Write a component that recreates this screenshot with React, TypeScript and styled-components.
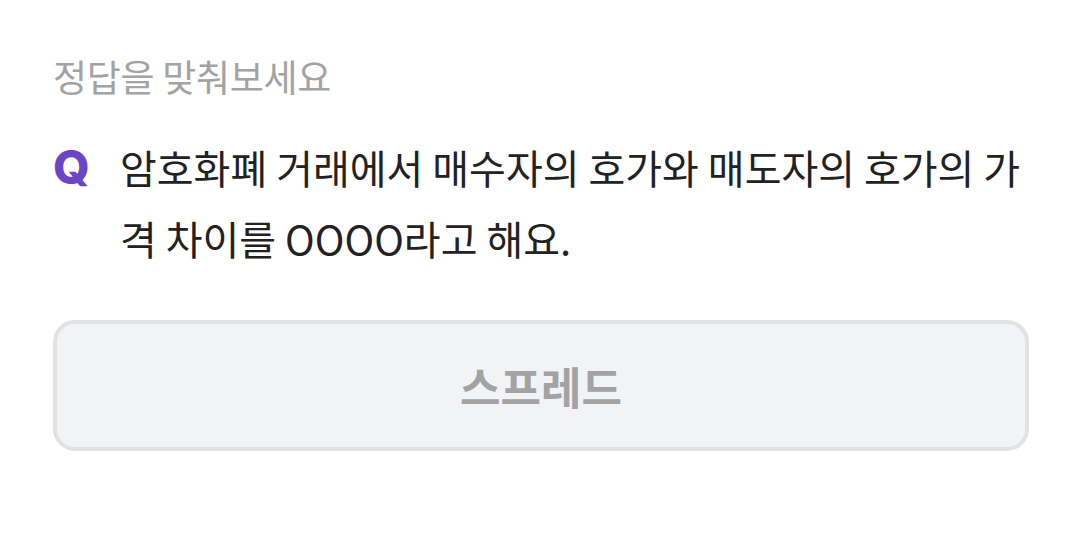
import React, { FC } from "react";
import styled, { createGlobalStyle } from "styled-components";

const GlobalStyle = createGlobalStyle`
  html, body {
    margin: 0;
    padding: 0;
    background: #ffffff;
  }
  body {
    font-family: "Noto Sans CJK KR", "Noto Sans", sans-serif;
  }
`;

const App: FC = () => {
  return (
    <>
      <GlobalStyle />
      <Wrapper>
        <Title>정답을 맞춰보세요</Title>
        <Question>
          <Mark>Q</Mark>
          <QuestionText>
            암호화폐 거래에서 매수자의 호가와 매도자의 호가의 가격 차이를 OOOO라고 해요.
          </QuestionText>
        </Question>
        <AnswerButton>스프레드</AnswerButton>
      </Wrapper>
    </>
  );
};

const Wrapper = styled.div`
  display: flex;
  flex-direction: column;
  padding: 50px 51px 0 53px;
  height: 559px;
  box-sizing: border-box;
`;

const Title = styled.div`
  font-size: 37px;
  line-height: 52px;
  color: #a3a3a3;
  letter-spacing: -0.3px;
`;

const Question = styled.div`
  display: flex;
  align-items: flex-start;
  gap: 27px;
  margin-top: 30px;
`;

const Mark = styled.div`
  font-family: "Inter", "Noto Sans", sans-serif;
  font-weight: 800;
  font-size: 47px;
  line-height: 70px;
  color: #6a45c4;
  width: 40px;
  flex-shrink: 0;
`;

const QuestionText = styled.div`
  font-size: 40px;
  line-height: 71px;
  color: #222222;
  word-break: break-all;
`;

const AnswerButton = styled.div`
  margin-top: 46px;
  height: 131px;
  box-sizing: border-box;
  display: flex;
  align-items: center;
  justify-content: center;
  background: #f2f3f5;
  border: 4px solid #e1e2e4;
  border-radius: 22px;
  font-size: 44px;
  font-weight: 700;
  color: #a3a3a3;
`;

export default App;
